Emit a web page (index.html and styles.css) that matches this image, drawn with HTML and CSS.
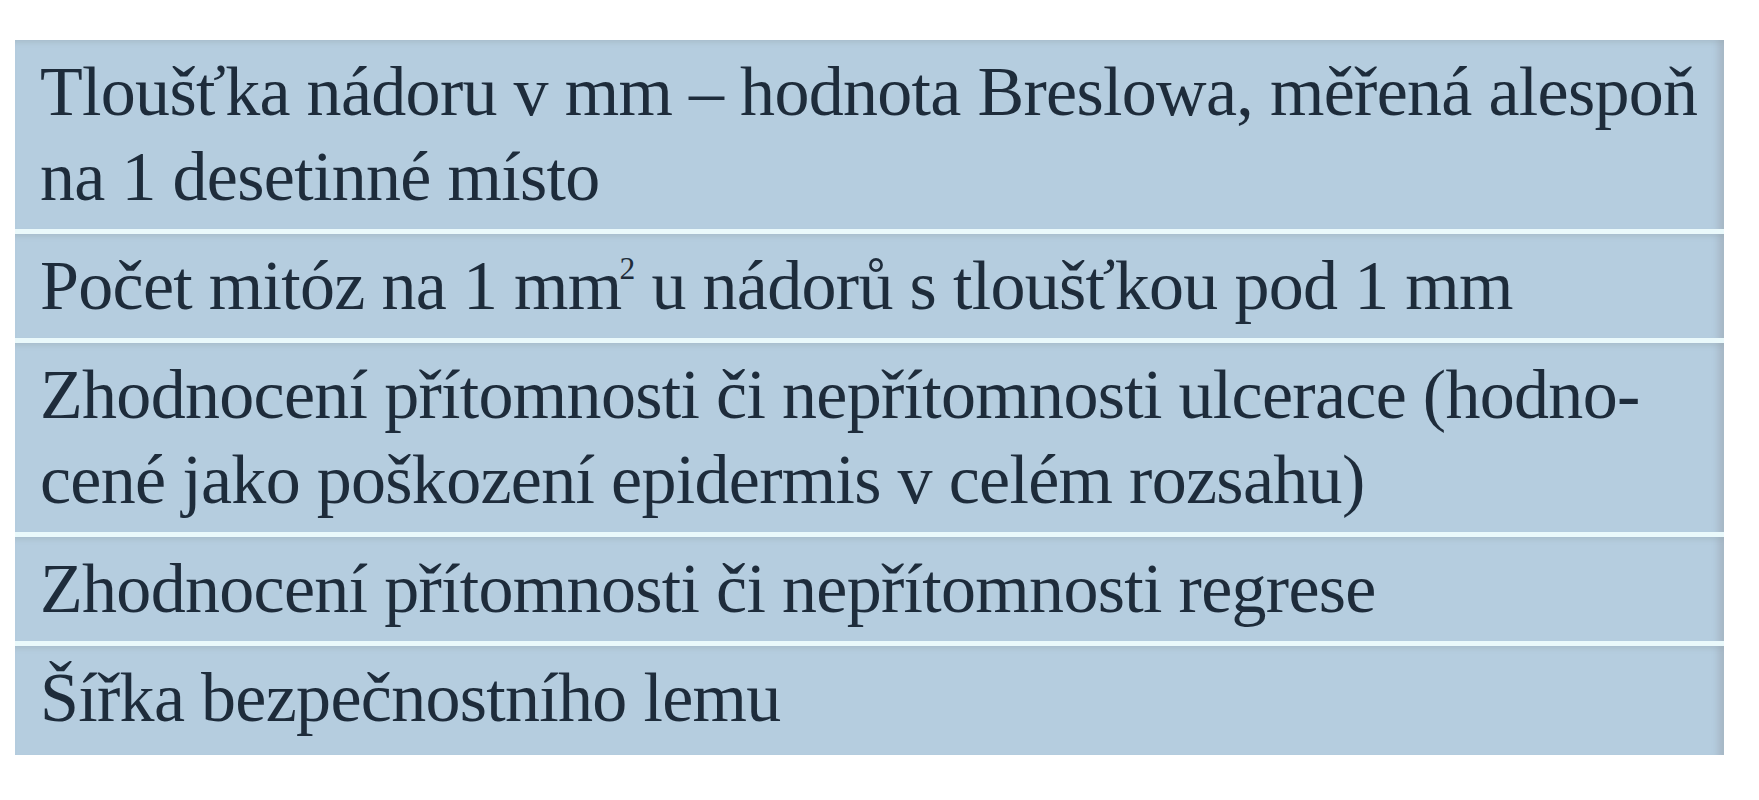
FILE: index.html
```html
<!DOCTYPE html>
<html lang="cs">
<head>
<meta charset="utf-8">
<link rel="stylesheet" href="styles.css">
</head>
<body>
<div class="table">
  <div class="row">Tloušťka nádoru v mm – hodnota Breslowa, měřená alespoň<br>na 1 desetinné místo</div>
  <div class="row">Počet mitóz na 1 mm<sup>2</sup> u nádorů s tloušťkou pod 1 mm</div>
  <div class="row">Zhodnocení přítomnosti či nepřítomnosti ulcerace (hodno-<br>cené jako poškození epidermis v celém rozsahu)</div>
  <div class="row">Zhodnocení přítomnosti či nepřítomnosti regrese</div>
  <div class="row last">Šířka bezpečnostního lemu</div>
</div>
</body>
</html>
```
FILE: styles.css
```css
html, body {
  margin: 0;
  padding: 0;
  background: #ffffff;
}
.table {
  margin: 40px 0 0 15px;
  width: 1709px;
  display: flex;
  flex-direction: column;
  gap: 5px;
  background: #eaf9fb;
}
.row {
  background: #b5cddf;
  box-shadow: inset 0 6px 4px -3px rgba(150, 165, 175, 0.35), inset -12px 0 6px -6px rgba(150, 160, 170, 0.45);
  color: #1e2c3b;
  font-family: "Liberation Serif", "DejaVu Serif", serif;
  font-size: 70px;
  letter-spacing: -0.7px;
  line-height: 85px;
  white-space: nowrap;
  padding: 9px 20px 10px 25px;
}
.row.last {
  padding-bottom: 15px;
}
sup {
  font-size: 0.45em;
  line-height: 0;
  vertical-align: 0.95em;
  margin-left: -2px;
}
```
